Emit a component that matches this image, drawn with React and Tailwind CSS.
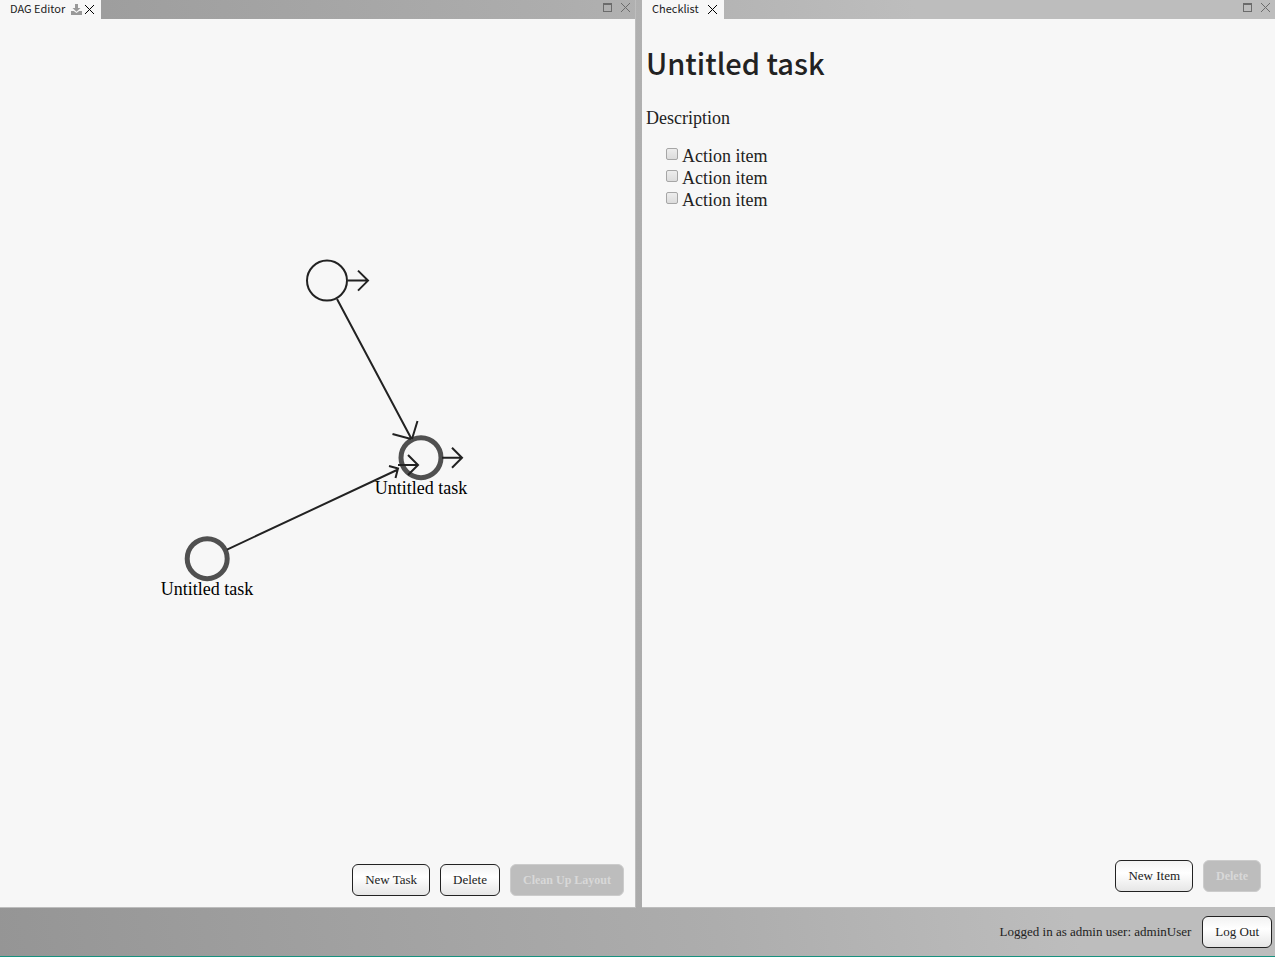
import React from "react";

const serif = "font-['Liberation_Serif',serif]";
const sans = "font-['Noto_Sans_CJK_SC',sans-serif]";

function CloseIcon({ className }) {
  return (
    <svg viewBox="0 0 9 9" className={`block size-[9px] ${className}`} shapeRendering="crispEdges" aria-hidden="true">
      <path d="M0 0L9 9M9 0L0 9" stroke="currentColor" strokeWidth="1" fill="none" />
    </svg>
  );
}

function PopInIcon() {
  return (
    <svg viewBox="0 0 11 11" className="block size-[11px] text-[#999999]" aria-hidden="true">
      <path d="M4 0h3v4h2.5L5.500 7.800 1.500 4H4z" fill="currentColor" />
      <path d="M0 7h2.800l2.700 2 2.700-2H11v4H0z" fill="currentColor" />
    </svg>
  );
}

function Pane({ title, popIn, children, className }) {
  return (
    <section className={`flex min-w-0 flex-col ${className}`}>
      <header className="flex h-[19px] items-start justify-between">
        <div className="flex h-[19px] items-center bg-[#f7f7f7] pl-[10px] pr-[7px]">
          <h2 className={`${sans} self-start text-[11px] leading-4 text-[#222222]`}>{title}</h2>
          {popIn ? (
            <button type="button" aria-label="Pop in" className="ml-[6px] mr-[3px]">
              <PopInIcon />
            </button>
          ) : (
            <span className="w-[9px]" />
          )}
          <button type="button" aria-label={`Close ${title}`}>
            <CloseIcon className="text-black" />
          </button>
        </div>
        <div className="flex h-[15px] items-center gap-[9px] pr-[5px] text-[#6b6b6b]">
          <button type="button" aria-label={`Maximise ${title}`}>
            <svg viewBox="0 0 9 9" className="block size-[9px]" shapeRendering="crispEdges" aria-hidden="true">
              <path d="M0 0h9v9H0zM1 2v6h7V2z" fill="currentColor" fillRule="evenodd" />
            </svg>
          </button>
          <button type="button" aria-label={`Close all in ${title}`}>
            <CloseIcon className="" />
          </button>
        </div>
      </header>
      <div className="flex min-h-0 flex-1 flex-col border-b border-[#bdbdbd] bg-[#f7f7f7]">{children}</div>
    </section>
  );
}

function Button({ children, disabled }) {
  const look = disabled
    ? "border-[#cccccc] bg-[#bdbdbd] text-[12px] font-bold text-[#d8d8d8]"
    : "border-[#222222] bg-linear-to-b from-[#f2f2f2] via-white via-40% to-[#e6e6e6] text-[13px] text-[#222222]";
  return (
    <button
      type="button"
      disabled={disabled}
      className={`${serif} h-8 rounded-md border px-3 leading-5 whitespace-nowrap ${look}`}
    >
      {children}
    </button>
  );
}

function Handle({ x, y }) {
  return <path d={`M${x} ${y}h20M${x + 10} ${y - 10}l10 10l-10 10`} />;
}

function Graph() {
  return (
    <svg className="block min-h-0 w-full flex-1 overflow-hidden" role="img" aria-label="Task graph">
      <g fill="none" stroke="#222222" strokeWidth="2">
        <circle cx="327" cy="261.6" r="20" fill="#f7f7f7" />
        <Handle x={348} y={261.6} />
        <g stroke="#505050" strokeWidth="5">
          <circle cx="421" cy="438.700" r="20" fill="#f7f7f7" />
          <circle cx="207.200" cy="539.700" r="20" fill="#f7f7f7" />
        </g>
        <path d="M337 280L411 419M392.500 415L411 420M417.500 402L412 420" />
        <path d="M227 530.600L398 450.500M389 447L398 449.500L395.500 459" />
        <Handle x={442} y={438.7} />
        <Handle x={398} y={446} />
      </g>
      <g className={`${serif} text-[18px]`} textAnchor="middle" fill="#000000">
        <text x="421" y="475">Untitled task</text>
        <text x="207" y="576">Untitled task</text>
      </g>
    </svg>
  );
}

const items = ["Action item", "Action item", "Action item"];

export default function App() {
  return (
    <div className="flex h-screen flex-col border-b border-[#18917f] bg-linear-[80deg,#959595_0%,#adadad_50%,#bdbdbd_75%]">
      <main className="flex min-h-0 flex-1 gap-[6px]">
        <Pane title="DAG Editor" popIn className="flex-[635] border-r border-[#bdbdbd]">
          <Graph />
          <div className="flex justify-end gap-[10px] px-[11px] pb-[11px]">
            <Button>New Task</Button>
            <Button>Delete</Button>
            <Button disabled>Clean Up Layout</Button>
          </div>
        </Pane>
        <Pane title="Checklist" className="flex-[633]">
          <div className="min-h-0 flex-1 px-1 pt-[21px]">
            <h1 className={`${sans} text-[29px] leading-[44px] font-medium text-[#222222]`}>Untitled task</h1>
            <p className={`${serif} mt-[23px] text-[18px] leading-[22px] text-[#222222]`}>Description</p>
            <ul className={`${serif} mt-4 pl-5 text-[18px] leading-[22px] text-[#222222]`}>
              {items.map((item, i) => (
                <li key={i}>
                  <label className="flex items-start gap-1">
                    <input
                      type="checkbox"
                      className="mt-[3px] size-3 appearance-none rounded-xs border border-[#a6a6a6] bg-linear-to-b from-[#ededed] to-[#dcdcdc] checked:bg-[#505050]"
                    />
                    {item}
                  </label>
                </li>
              ))}
            </ul>
          </div>
          <div className="flex justify-end gap-[10px] px-[14px] pb-[15px]">
            <Button>New Item</Button>
            <Button disabled>Delete</Button>
          </div>
        </Pane>
      </main>
      <footer className="flex h-12 items-center justify-end gap-[11px] pr-[3px]">
        <span className={`${serif} text-[13px] leading-5 text-[#222222]`}>Logged in as admin user: adminUser</span>
        <Button>Log Out</Button>
      </footer>
    </div>
  );
}
